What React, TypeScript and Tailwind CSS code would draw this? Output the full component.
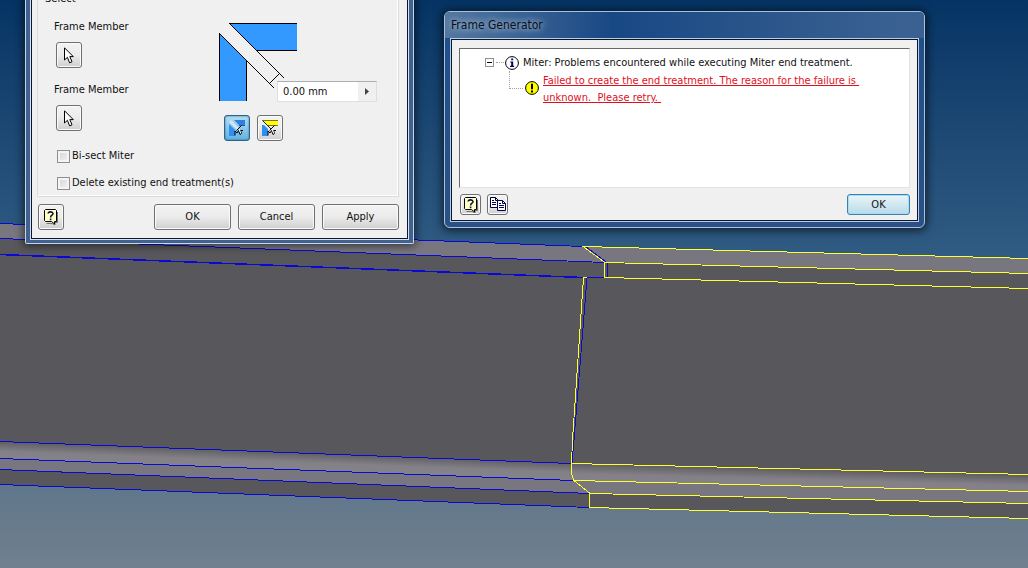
import React from "react";

const uiFont = "font-['DejaVu_Sans_Condensed','DejaVu_Sans',sans-serif] text-[11px] leading-[14px] text-[#111]";
const face =
  "rounded-[3px] border border-[#707070] bg-linear-to-b from-[#f3f3f3] from-0% via-[#ebebeb] via-50% to-[#cfcfcf] shadow-[inset_0_0_0_1px_#fafafa]";

function PushButton({ children }: { children: React.ReactNode }) {
  return <button className={`h-[26px] w-[77px] ${face}`}>{children}</button>;
}

function CursorIcon() {
  return (
    <svg width="10" height="17" viewBox="0 0 10 17" aria-hidden="true">
      <path
        d="M.5 .8V13L3.4 10.3L5.6 15.8L8 14.8L5.8 9.6H9.3Z"
        fill="#fff"
        stroke="#000"
        strokeWidth="1"
      />
    </svg>
  );
}

function HelpIcon() {
  return (
    <svg width="14" height="16" viewBox="0 0 14 16" aria-hidden="true">
      <path d="M2.5 14.5H8L11 16V13.5H13.5V3" fill="none" stroke="#777" />
      <path d="M1.5 .5H11.5L12.5 1.5V12.5H10.5V15L7.5 12.5H1.5L.5 11.5V1.5Z" fill="#ffffc8" stroke="#000" />
      <path
        d="M4.2 4.6C4.2 2.4 9 2.2 9 4.7C9 6.3 6.6 6.2 6.6 8.4M6.6 9.6V11.2"
        fill="none"
        stroke="#111144"
        strokeWidth="1.6"
      />
    </svg>
  );
}

function CopyIcon() {
  return (
    <svg width="16" height="15" viewBox="0 0 16 15" aria-hidden="true">
      <path d="M.5 .5H5.5L8.5 3.5V10.5H.5Z" fill="#fff" stroke="#000033" />
      <path d="M5.5 .5V3.5H8.5M2 3.5H4M2 5.5H6M2 7.5H6" fill="none" stroke="#000033" />
      <path d="M7.5 3.5H12.5L15.5 6.5V13.5H7.5Z" fill="#fff" stroke="#000055" />
      <path d="M12.5 3.5V6.5H15.5M9 6.5H11M9 8.5H14M9 10.5H14" fill="none" stroke="#000055" />
    </svg>
  );
}

function MiterModeIcon({ full }: { full: boolean }) {
  return (
    <svg width="16" height="17" viewBox="0 0 16 17" aria-hidden="true">
      <path d={full ? "M0 0H16V5H5Z" : "M5 0H16V5H10Z"} fill={full ? "#ffff00" : "#2f7fe0"} />
      <path d={full ? "M0 .5H16M5 5.5H16" : "M10 5.5H16"} stroke={full ? "#77752a" : "#245f9e"} />
      <path d={full ? "M0 5V16H6V9L2 5Z" : "M0 4V16H6V10Z"} fill="#2f8ef0" />
      <path d="M1 1L9 9" stroke={full ? "#222" : "#cfe9fa"} strokeWidth={full ? 1 : 2.5} />
      <path
        d="M12.5 5.5L7.5 10.5M6 15.5V11L8 13L9.5 10.5L11 14.5L12.5 13.5L11.5 10.5H14"
        fill="none"
        stroke="#000"
        strokeWidth="1"
      />
      <path d="M10 9L11.8 13.3" stroke="#fff" />
    </svg>
  );
}

function MiterDiagram() {
  return (
    <svg width="79" height="79" viewBox="219 23 79 79" shapeRendering="crispEdges" aria-hidden="true" className="block">
      <path d="M229 23H297V51H257Z" fill="#3399ff" />
      <path d="M219 33L247 61V101H219Z" fill="#3399ff" />
      <path
        d="M297 23.5H229.5L284.5 78.5M256.5 50.5H297M219.5 101V33.5L274.5 88.5M246.5 61V101M269.5 83.5L279.5 73.5"
        fill="none"
        stroke="#000"
      />
    </svg>
  );
}

function Scene() {
  return (
    <svg
      className="absolute inset-0 h-full w-full"
      viewBox="0 0 1028 568"
      preserveAspectRatio="none"
      shapeRendering="crispEdges"
      aria-hidden="true"
    >
      <defs>
        <linearGradient id="fillet" gradientUnits="userSpaceOnUse" x1="300" y1="451" x2="299.3" y2="470">
          <stop offset="0" stopColor="#5a595d" />
          <stop offset=".6" stopColor="#838187" />
          <stop offset="1" stopColor="#85838a" />
        </linearGradient>
        <linearGradient id="filletRight" gradientUnits="userSpaceOnUse" x1="800" y1="468" x2="799.5" y2="487">
          <stop offset="0" stopColor="#5a595d" />
          <stop offset=".6" stopColor="#838187" />
          <stop offset="1" stopColor="#85838a" />
        </linearGradient>
      </defs>
      <path d="M0 223L583 247L1028 258V519L589 507L0 484Z" fill="#58585c" />
      <path d="M0 223L583 247L1028 258V273L605 263L0 239Z" fill="#78777f" />
      <path d="M0 441L572 463L574 481L0 458Z" fill="url(#fillet)" />
      <path d="M572 463L1028 474V492L574 481Z" fill="url(#filletRight)" />
      <path d="M0 458L574 481L1028 492V504L590 493L0 470Z" fill="#78777f" />
      <g fill="none" stroke="#0808d8">
        <path d="M0 223.5L583 246.5M0 238.5L605 262.5M0 441.5L571 463.5M0 458.5L573 480.5M0 469.5L590 493.5M0 484.5L589 507.5" />
        <path d="M0 254.5L583 277.5H606M586 247L607 262.5V277M587 278L574 440L572 463" />
        <path d="M0 254.5L583 277.5" strokeWidth="1.5" />
      </g>
      <g fill="none" stroke="#ffff30">
        <path d="M1028 258.5L583 246.5L605 262.5L1028 273.5M604.5 263V277.5L1028 288.5" />
        <path d="M587 277.5H583.5L572.5 440L571.5 463.5V474L574 480.5L590 493.5L589.5 507.5L1028 518.5" />
        <path d="M571 463.5L1028 474.5M574 480.5L1028 491.5M590 493.5L1028 503.5" />
      </g>
    </svg>
  );
}

function MemberPicker({ id }: { id: string }) {
  return (
    <div className="flex flex-col items-start gap-2">
      <label htmlFor={id}>Frame Member</label>
      <button id={id} className={`ml-0.5 flex size-[26px] items-center justify-center ${face}`}>
        <CursorIcon />
      </button>
    </div>
  );
}

function CheckRow({ label }: { label: string }) {
  return (
    <label className="flex items-center gap-0.5">
      <input
        type="checkbox"
        className="size-[13px] appearance-none border border-[#8e8f8f] bg-linear-to-br from-[#cfd2d6] to-[#f6f6f6] shadow-[inset_0_0_0_2px_#f4f4f4] checked:bg-[#3a6ea5]"
      />
      {label}
    </label>
  );
}

function EndTreatmentDialog() {
  return (
    <section className="absolute -top-2 left-[25px] w-[389px] rounded-b-[2px] border border-t-0 border-[#c3d6ea] bg-[#42618f] px-1 pb-[3px] shadow-[0_0_8px_2px_rgba(0,0,0,0.55)]">
      <div className="border border-t-0 border-[#d5e3f2]">
        <div className="border border-t-0 border-[#0b1730] bg-[#f0f0f0] pr-2 pb-2 pl-[5px]">
          <fieldset className="h-[205px] border border-[#dcdcdc] pb-1.5 shadow-[inset_-1px_-1px_0_#fff]">
            <legend className="ml-[7px]">Select</legend>
            <div className="flex pt-3.5 pl-4">
              <div className="flex w-[165px] flex-col gap-[15px]">
                <MemberPicker id="member-one" />
                <MemberPicker id="member-two" />
              </div>
              <div className="mt-[3px]">
                <MiterDiagram />
                <div className="-mt-[21px] ml-[58px] flex h-[21px] w-[100px] border border-[#dcdfe4] border-t-[#abadb3] bg-white">
                  <input
                    aria-label="Gap"
                    defaultValue="0.00 mm"
                    className="min-w-0 flex-1 bg-transparent pl-[5px] outline-none"
                  />
                  <button aria-label="More" className="flex w-[18px] items-center justify-center bg-[#f0f0f0]">
                    <svg width="4" height="7" viewBox="0 0 4 7" aria-hidden="true">
                      <path d="M0 0L4 3.5L0 7Z" fill="#444" />
                    </svg>
                  </button>
                </div>
                <div className="mt-[13px] ml-[5px] flex gap-[7px]">
                  <button
                    aria-label="Miter both"
                    className="flex size-[26px] items-center justify-center rounded-[3px] border border-[#2c628b] bg-linear-to-b from-[#b5dcf2] to-[#61b3e0] shadow-[inset_0_0_2px_#2c628b]"
                  >
                    <MiterModeIcon full={false} />
                  </button>
                  <button aria-label="Miter one" className={`flex size-[26px] items-center justify-center ${face}`}>
                    <MiterModeIcon full />
                  </button>
                </div>
              </div>
            </div>
            <div className="mt-2 flex flex-col gap-[13px] pl-[19px]">
              <CheckRow label="Bi-sect Miter" />
              <CheckRow label="Delete existing end treatment(s)" />
            </div>
          </fieldset>
          <div className="mt-[7px] flex gap-[7px] pl-px">
            <button aria-label="Help" className={`mr-auto flex size-[26px] items-center justify-center ${face}`}>
              <HelpIcon />
            </button>
            <PushButton>OK</PushButton>
            <PushButton>Cancel</PushButton>
            <PushButton>Apply</PushButton>
          </div>
        </div>
      </div>
    </section>
  );
}

function FrameGeneratorDialog() {
  return (
    <section className="absolute top-[11px] left-[444px] w-[481px] rounded-[6px] border border-[#a9c1dc] bg-linear-to-b from-[#1d4f8c] to-[#2b5186] px-[5px] pb-[5px] shadow-[0_1px_8px_2px_rgba(0,0,0,0.6)]">
      <header className="-mx-[5px] flex h-[26px] items-center rounded-t-[5px] bg-linear-to-r from-[#54779f] from-0% via-[#184884] via-35% to-[#3a6191] to-95% px-1.5">
        <h1 className="text-[12px] text-[#0a0f18] [text-shadow:0_0_6px_#a9bdd5,0_0_8px_#a9bdd5]">Frame Generator</h1>
      </header>
      <div className="border border-[#b9cee4]">
        <div className="border border-[#0b1730] bg-[#f0f0f0] px-[7px] pt-2 pb-[5px]">
          <div className="h-[140px] border border-t-[#696969] border-r-[#e3e3e3] border-b-[#e3e3e3] border-l-[#696969] bg-white pt-[5px] pl-[25px]">
            <div className="flex h-[17px] items-center">
              <button aria-label="Collapse" className="flex">
                <svg width="9" height="9" viewBox="0 0 9 9" shapeRendering="crispEdges" aria-hidden="true">
                  <path d="M.5 .5H8.5V8.5H.5Z" fill="#fff" stroke="#919191" />
                  <path d="M2 4.5H7" stroke="#000" />
                </svg>
              </button>
              <span className="ml-0.5 w-2 border-t border-dotted border-[#a0a0a0]" />
              <svg className="ml-px" width="14" height="14" viewBox="0 0 14 14" aria-hidden="true">
                <circle cx="7" cy="7" r="6.4" fill="#fff" stroke="#000" />
                <path d="M6.2 2.5H8.2V4.3H6.2ZM5.2 5.5H8.2V9.8H9.2V11H5V9.8H6.2V6.6H5.2Z" fill="#000066" />
              </svg>
              <span className="ml-1">Miter: Problems encountered while executing Miter end treatment.</span>
            </div>
            <div className="flex pl-6">
              <span className="h-[18px] w-3.5 border-b border-l border-dotted border-[#a0a0a0]" />
              <svg className="mt-2.5 ml-0.5 shrink-0" width="14" height="14" viewBox="0 0 14 14" aria-hidden="true">
                <circle cx="7" cy="7" r="6.4" fill="#ffff00" stroke="#000" />
                <path d="M6 2.8H8V8.2H6ZM6 9.5H8V11.4H6Z" fill="#000" />
              </svg>
              <a href="#failure" className="ml-1 pt-px leading-[17px] whitespace-pre text-[#e0101c] underline underline-offset-1">
                {"Failed to create the end treatment. The reason for the failure is \nunknown.  Please retry. "}
              </a>
            </div>
          </div>
          <div className="mt-1.5 flex items-center gap-1.5">
            <button aria-label="Help" className={`ml-px flex size-[21px] items-center justify-center ${face}`}>
              <HelpIcon />
            </button>
            <button aria-label="Copy" className={`flex size-[21px] items-center justify-center ${face}`}>
              <CopyIcon />
            </button>
            <button className="ml-auto h-[21px] w-[63px] rounded-[3px] border border-[#3c7fb1] bg-linear-to-b from-[#eaf5f9] to-[#b9dbe8] shadow-[inset_0_0_0_1px_#a5e0f0]">
              OK
            </button>
          </div>
        </div>
      </div>
    </section>
  );
}

export default function App() {
  return (
    <main
      className={`relative min-h-screen w-full overflow-hidden bg-linear-to-b from-[#053464] from-0% via-[#305b82] via-45% to-[#70808e] to-100% ${uiFont}`}
    >
      <Scene />
      <EndTreatmentDialog />
      <FrameGeneratorDialog />
    </main>
  );
}
